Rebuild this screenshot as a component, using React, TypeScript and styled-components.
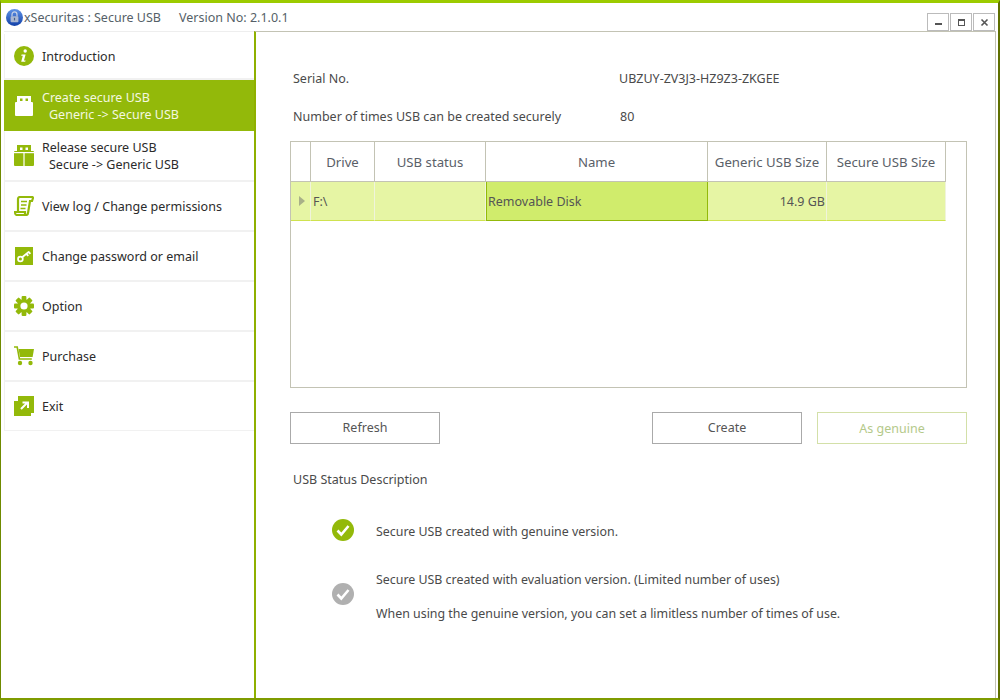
import styled, { createGlobalStyle } from "styled-components";

const GlobalStyle = createGlobalStyle`
  html, body {
    margin: 0;
    padding: 0;
    background: #fff;
  }
  body {
    font-family: "Noto Sans", "Open Sans", sans-serif;
    font-size: 12.5px;
    color: #444;
  }
`;

const Window = styled.div`
  width: 1000px;
  height: 700px;
  box-sizing: border-box;
  display: flex;
  flex-direction: column;
  background: #fff;
  border-top: 3px solid #9ccb00;
  border-left: 1px solid #6f8a00;
  border-right: 2px solid #5f7000;
  border-bottom: 2px solid #7f9c00;
  overflow: hidden;
`;

const TitleBar = styled.div`
  height: 28px;
  flex: none;
  display: flex;
  align-items: center;
  padding-left: 5px;
  position: relative;
  color: #555f68;
`;

const AppName = styled.span`
  margin-left: 1px;
  width: 155px;
  white-space: nowrap;
`;

const Version = styled.span`
  white-space: nowrap;
`;

const WinButtons = styled.div`
  position: absolute;
  right: 3px;
  top: 10px;
  display: flex;
  gap: 1px;
`;

const WinButton = styled.div`
  width: 22px;
  height: 18px;
  box-sizing: border-box;
  border: 1px solid #aaa;
  outline: 0.5px solid #bbb;
  outline-offset: -1.5px;
  background: #fff;
  display: flex;
  align-items: center;
  justify-content: center;
`;

const Body = styled.div`
  flex: 1;
  display: flex;
  min-height: 0;
  padding-left: 3px;
`;

const Sidebar = styled.nav`
  width: 250px;
  flex: none;
  display: flex;
  flex-direction: column;
  padding-top: 2px;
  border-top: 1px solid #eee;
  box-sizing: border-box;
`;

const MenuItem = styled.div<{ $active?: boolean; $h?: number; $last?: boolean }>`
  height: ${(p) => p.$h ?? 50}px;
  flex: none;
  box-sizing: border-box;
  display: flex;
  align-items: center;
  gap: 8px;
  background: ${(p) => (p.$active ? "#93b90a" : "#fff")};
  color: ${(p) => (p.$active ? "#f4f8e0" : "#2b2b2b")};
  border-bottom: ${(p) => (p.$active ? "none" : p.$last ? "1px solid #f1f1f1" : "2px solid #f1f1f1")};
  border-left: ${(p) => (p.$active ? "none" : "1px solid #f1f1f1")};
  padding-left: ${(p) => (p.$active ? 10 : 9)}px;
`;

const IconSlot = styled.div`
  width: 20px;
  height: 20px;
  flex: none;
  display: flex;
  align-items: center;
  justify-content: center;
`;

const ItemText = styled.div`
  line-height: 17px;
  white-space: nowrap;
`;

const SubLine = styled.div`
  padding-left: 7px;
`;

const Main = styled.main`
  flex: 1;
  min-width: 0;
  display: flex;
  flex-direction: column;
  box-sizing: border-box;
  border-left: 2px solid #8fb000;
  border-top: 1px solid #c3c3b4;
  border-right: 1px solid #c3c3b4;
  margin-right: 2px;
  padding: 36px 28px 0 34px;
  color: #4a4a4a;
`;

const InfoRow = styled.div`
  display: flex;
  height: 20px;
  align-items: center;
  padding-left: 3px;
  margin-bottom: 18px;
`;

const InfoLabel = styled.span`
  width: 326px;
  white-space: nowrap;
`;

const UseCount = styled.span`
  padding-left: 1px;
`;

const TableBox = styled.div`
  height: 247px;
  box-sizing: border-box;
  margin-top: -3px;
  border: 1px solid #c3c3b4;
`;

const Grid = styled.div`
  display: grid;
  grid-template-columns: 20px 64px 111px 222px 119px 119px;
  width: 655px;
`;

const HeadCell = styled.div`
  height: 40px;
  box-sizing: border-box;
  border-right: 1px solid #c3c3b4;
  border-bottom: 1px solid #c3c3b4;
  display: flex;
  align-items: center;
  justify-content: center;
  color: #5a6068;
  font-size: 13.2px;
  white-space: nowrap;
`;

const RowCell = styled.div<{ $selected?: boolean; $right?: boolean }>`
  height: 39px;
  box-sizing: border-box;
  background: ${(p) => (p.$selected ? "#d0ec6c" : "#e6f5a4")};
  border-right: 1px solid ${(p) => (p.$selected ? "#93b90a" : "#f0f4dc")};
  border-left: ${(p) => (p.$selected ? "1px solid #93b90a" : "none")};
  border-bottom: 1px solid ${(p) => (p.$selected ? "#93b90a" : "#cfe24f")};
  display: flex;
  align-items: center;
  justify-content: ${(p) => (p.$right ? "flex-end" : "flex-start")};
  padding: 0 ${(p) => (p.$right || p.$selected ? 1 : 2)}px;
  color: #555;
  white-space: nowrap;
`;

const RowArrow = styled.div`
  width: 0;
  height: 0;
  margin-left: 6px;
  border-left: 6px solid #a8b088;
  border-top: 5px solid transparent;
  border-bottom: 5px solid transparent;
`;

const ButtonRow = styled.div`
  display: flex;
  margin-top: 24px;
`;

const ActionButton = styled.button<{ $disabled?: boolean }>`
  width: 150px;
  height: 32px;
  box-sizing: border-box;
  padding: 0 0 ${(p) => (p.$disabled ? 0 : 2)}px;
  background: #fff;
  font: inherit;
  border: 1px solid ${(p) => (p.$disabled ? "#d3e0a8" : "#aaa")};
  color: ${(p) => (p.$disabled ? "#b4c98a" : "#555")};
`;

const ActionGroup = styled.div`
  margin-left: auto;
  display: flex;
  gap: 15px;
`;

const SectionTitle = styled.div`
  margin-top: 26px;
  padding-left: 3px;
  line-height: 20px;
`;

const StatusList = styled.div`
  padding: 29px 0 0 42px;
  display: flex;
  flex-direction: column;
  gap: 25px;
  font-size: 12.4px;
`;

const StatusRow = styled.div`
  display: flex;
  align-items: center;
  gap: 22px;
`;

const CheckSlot = styled.div<{ $lift: number }>`
  width: 22px;
  height: 22px;
  flex: none;
  margin-bottom: ${(p) => p.$lift}px;
`;

const StatusText = styled.div`
  display: flex;
  flex-direction: column;
  gap: 14px;
  line-height: 20px;
  white-space: nowrap;
`;

const GREEN = "#93b90a";

const Check = ({ color }: { color: string }) => (
  <svg width="22" height="22" viewBox="0 0 22 22" style={{ display: "block" }}>
    <circle cx="11" cy="11" r="11" fill={color} />
    <path d="M5.5 11.5l3.8 4L16.5 7" fill="none" stroke="#fff" strokeWidth="2.6" />
  </svg>
);

const LockLogo = () => (
  <svg width="17" height="17" viewBox="0 0 17 17" style={{ flex: "none" }}>
    <defs>
      <linearGradient id="logoBlue" x1="0" y1="0" x2="0" y2="1">
        <stop offset="0" stopColor="#5f93e6" />
        <stop offset="1" stopColor="#1240a8" />
      </linearGradient>
    </defs>
    <circle cx="8.5" cy="8.5" r="8.5" fill="url(#logoBlue)" />
    <path d="M6 7.4V5.4a2.5 2.5 0 0 1 5 0v2" fill="none" stroke="#c9d3e6" strokeWidth="1.2" />
    <rect x="4.6" y="7.2" width="7.8" height="6" rx="0.8" fill="#aab8d2" />
    <rect x="7.9" y="8.8" width="1.2" height="2.6" fill="#4a5f88" />
  </svg>
);

const InfoIcon = () => (
  <svg width="20" height="20" viewBox="0 0 20 20">
    <circle cx="10" cy="10" r="10" fill={GREEN} />
    <circle cx="11.2" cy="5" r="1.7" fill="#fff" />
    <path d="M7.6 8.4h4l-1.6 6h1.6l-.4 1.4H7.2l1.6-6H7.2z" fill="#fff" />
  </svg>
);

const UsbWhite = () => (
  <svg width="18" height="20" viewBox="0 0 18 20">
    <path d="M2 0h14v6h1a1 1 0 0 1 1 1v12a1 1 0 0 1-1 1H1a1 1 0 0 1-1-1V7a1 1 0 0 1 1-1h1z" fill="#fff" />
    <rect x="5" y="2.5" width="2.5" height="2.5" fill="#93b90a" />
    <rect x="10.5" y="2.5" width="2.5" height="2.5" fill="#93b90a" />
  </svg>
);

const UsbSplit = () => (
  <svg width="20" height="21" viewBox="0 0 20 21">
    <path d="M3 0h14v6h2a1 1 0 0 1 1 1v13a1 1 0 0 1-1 1H1a1 1 0 0 1-1-1V7a1 1 0 0 1 1-1h2z" fill={GREEN} />
    <rect x="6" y="2.5" width="2.5" height="2.5" fill="#fff" />
    <rect x="11.5" y="2.5" width="2.5" height="2.5" fill="#fff" />
    <rect x="9.4" y="7.5" width="1.2" height="13.5" fill="#fff" />
    <rect x="0" y="7" width="20" height="1.2" fill="#fff" />
  </svg>
);

const LogIcon = () => (
  <svg width="20" height="20" viewBox="0 0 20 20" fill="none" stroke={GREEN} strokeWidth="2.2">
    <path d="M4 15V3a2 2 0 0 1 2-2h12c1 0 1 1 1 1l-1 3h-2l-2 12a2 2 0 0 1-2 2H3c-2 0-2-1-2-3h10v2" />
    <path d="M7 5.5h6M7 9h5.5M6.5 12.5h5" strokeWidth="1.6" />
  </svg>
);

const KeyIcon = () => (
  <svg width="18" height="18" viewBox="0 0 18 18">
    <rect width="18" height="18" fill={GREEN} />
    <circle cx="5.4" cy="12" r="2.4" fill="none" stroke="#fff" strokeWidth="1.7" />
    <path d="M7.2 10.2L14 4.6M11.4 6.8l1.9 2M13.6 5l1.8 1.8" stroke="#fff" strokeWidth="1.8" fill="none" />
  </svg>
);

const GearIcon = () => (
  <svg width="20" height="20" viewBox="0 0 20 20">
    <g fill={GREEN}>
      {[0, 45, 90, 135, 180, 225, 270, 315].map((a) => (
        <rect key={a} x="7.6" y="0" width="4.8" height="5" rx="1" transform={`rotate(${a} 10 10)`} />
      ))}
    </g>
    <circle cx="10" cy="10" r="5.2" fill="none" stroke={GREEN} strokeWidth="3.2" />
  </svg>
);

const CartIcon = () => (
  <svg width="20" height="20" viewBox="0 0 20 20">
    <path d="M0 1h3.2l2.2 12h12.4" fill="none" stroke={GREEN} strokeWidth="1.6" />
    <path d="M4.6 3H20l-1.4 8H6z" fill={GREEN} />
    <circle cx="6" cy="17" r="2.2" fill={GREEN} />
    <circle cx="16.5" cy="17" r="2.2" fill={GREEN} />
  </svg>
);

const ExitIcon = () => (
  <svg width="20" height="20" viewBox="0 0 20 20">
    <path d="M4 0h16v17h-3v3H0V5h4z" fill={GREEN} />
    <path d="M7 13l6-6M8.5 6.5h5.5V12" fill="none" stroke="#fff" strokeWidth="2" />
  </svg>
);

const menu = [
  { icon: <InfoIcon />, lines: ["Introduction"], h: 46 },
  { icon: <UsbWhite />, lines: ["Create secure USB", "Generic -> Secure USB"], h: 51, active: true },
  { icon: <UsbSplit />, lines: ["Release secure USB", "Secure -> Generic USB"], h: 51 },
  { icon: <LogIcon />, lines: ["View log / Change permissions"] },
  { icon: <KeyIcon />, lines: ["Change password or email"] },
  { icon: <GearIcon />, lines: ["Option"] },
  { icon: <CartIcon />, lines: ["Purchase"] },
  { icon: <ExitIcon />, lines: ["Exit"], h: 49, last: true },
];

const heads = ["", "Drive", "USB status", "Name", "Generic USB Size", "Secure USB Size"];

export default function App() {
  return (
    <>
      <GlobalStyle />
      <Window>
        <TitleBar>
          <LockLogo />
          <AppName>xSecuritas : Secure USB</AppName>
          <Version>Version No: 2.1.0.1</Version>
          <WinButtons>
            <WinButton>
              <svg width="9" height="9" viewBox="0 0 9 9">
                <rect x="1" y="5" width="7" height="2" fill="#555" />
              </svg>
            </WinButton>
            <WinButton>
              <svg width="9" height="9" viewBox="0 0 9 9">
                <rect x="1.5" y="1.5" width="6" height="6" fill="none" stroke="#555" />
                <rect x="1" y="1" width="7" height="2" fill="#555" />
              </svg>
            </WinButton>
            <WinButton>
              <svg width="9" height="9" viewBox="0 0 9 9">
                <path d="M1.5 1.5l6 6M7.5 1.5l-6 6" stroke="#555" strokeWidth="1.6" />
              </svg>
            </WinButton>
          </WinButtons>
        </TitleBar>
        <Body>
          <Sidebar>
            {menu.map((m) => (
              <MenuItem key={m.lines[0]} $active={m.active} $h={m.h} $last={m.last}>
                <IconSlot>{m.icon}</IconSlot>
                <ItemText>
                  <div>{m.lines[0]}</div>
                  {m.lines[1] && <SubLine>{m.lines[1]}</SubLine>}
                </ItemText>
              </MenuItem>
            ))}
          </Sidebar>
          <Main>
            <InfoRow>
              <InfoLabel>Serial No.</InfoLabel>
              <span>UBZUY-ZV3J3-HZ9Z3-ZKGEE</span>
            </InfoRow>
            <InfoRow>
              <InfoLabel>Number of times USB can be created securely</InfoLabel>
              <UseCount>80</UseCount>
            </InfoRow>
            <TableBox>
              <Grid>
                {heads.map((h) => (
                  <HeadCell key={h}>{h}</HeadCell>
                ))}
                <RowCell>
                  <RowArrow />
                </RowCell>
                <RowCell>F:\</RowCell>
                <RowCell />
                <RowCell $selected>Removable Disk</RowCell>
                <RowCell $right>14.9 GB</RowCell>
                <RowCell />
              </Grid>
            </TableBox>
            <ButtonRow>
              <ActionButton>Refresh</ActionButton>
              <ActionGroup>
                <ActionButton>Create</ActionButton>
                <ActionButton $disabled>As genuine</ActionButton>
              </ActionGroup>
            </ButtonRow>
            <SectionTitle>USB Status Description</SectionTitle>
            <StatusList>
              <StatusRow>
                <CheckSlot $lift={4}>
                  <Check color={GREEN} />
                </CheckSlot>
                <StatusText>
                  <div>Secure USB created with genuine version.</div>
                </StatusText>
              </StatusRow>
              <StatusRow>
                <CheckSlot $lift={6}>
                  <Check color="#b0b0b0" />
                </CheckSlot>
                <StatusText>
                  <div>Secure USB created with evaluation version. (Limited number of uses)</div>
                  <div>When using the genuine version, you can set a limitless number of times of use.</div>
                </StatusText>
              </StatusRow>
            </StatusList>
          </Main>
        </Body>
      </Window>
    </>
  );
}
